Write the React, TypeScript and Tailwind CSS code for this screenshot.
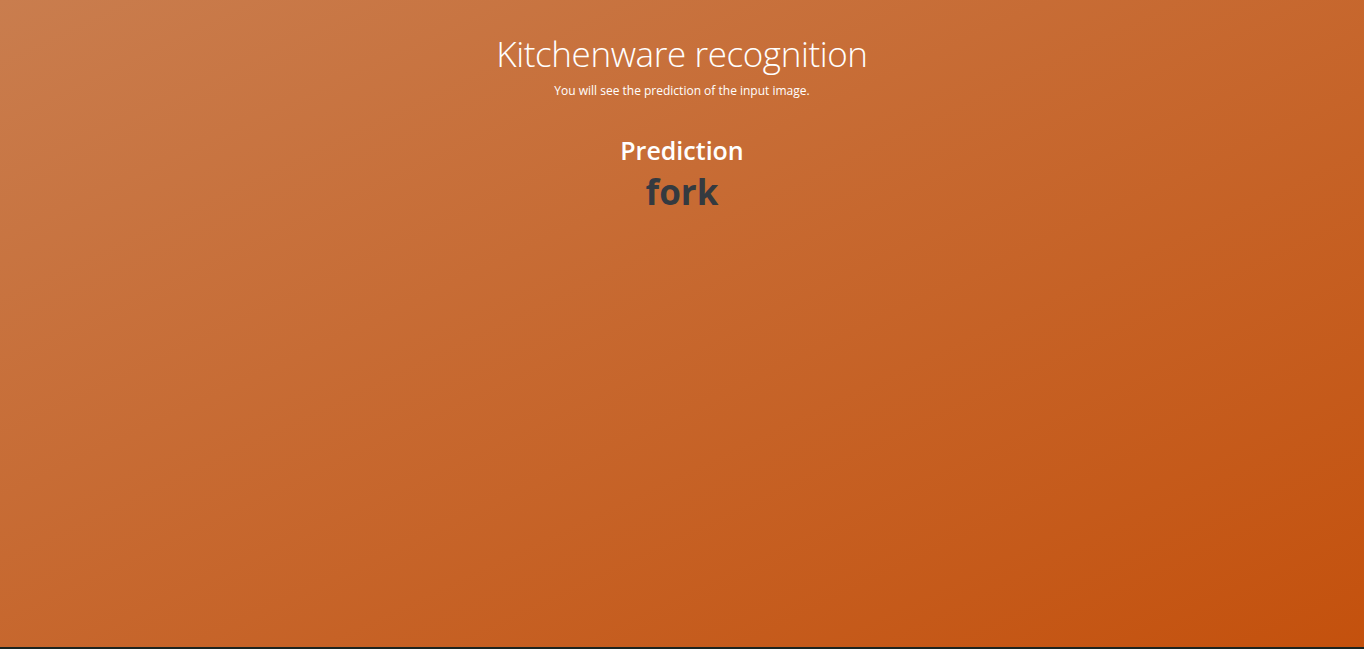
export default function App() {
  return (
    <div className="flex flex-col h-[649px] bg-[#1c2420]" style={{ fontFamily: '"Open Sans", "Noto Sans", sans-serif' }}>
      <main className="h-[647px] bg-[linear-gradient(to_bottom_right,#c97d4e,#c4510d)] flex flex-col items-center text-center">
        <h1 className="mt-[30px] text-[35px] leading-[48px] font-light text-white tracking-[-0.4px]">Kitchenware recognition</h1>
        <p className="mt-[5px] text-[12px] leading-[16px] font-normal text-white">You will see the prediction of the input image.</p>

        <h2 className="mt-[34px] text-[25px] leading-[34px] font-semibold text-white">Prediction</h2>
        <div className="mt-[3px] text-[35px] leading-[44px] font-bold text-[#343a40]">fork</div>
      </main>
      <div className="h-[2px]" />
    </div>
  );
}
